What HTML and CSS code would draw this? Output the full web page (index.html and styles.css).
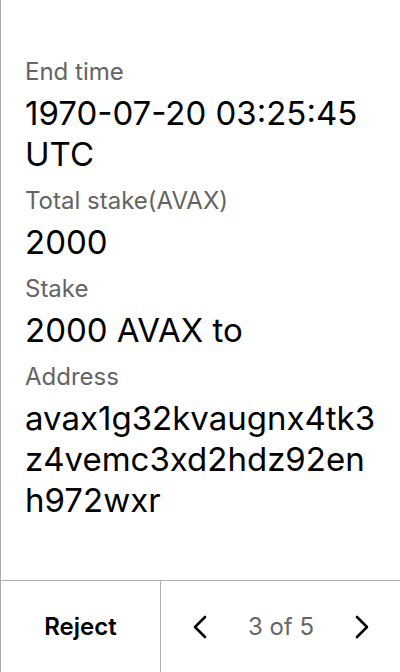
FILE: index.html
```html
<!DOCTYPE html>
<html>
<head>
<meta charset="utf-8">
<link rel="stylesheet" href="styles.css">
</head>
<body>
<div class="screen">
  <div class="content">
    <div class="field">
      <div class="label">End time</div>
      <div class="value">1970-07-20 03:25:45 UTC</div>
    </div>
    <div class="field">
      <div class="label">Total stake(AVAX)</div>
      <div class="value">2000</div>
    </div>
    <div class="field">
      <div class="label">Stake</div>
      <div class="value">2000 AVAX to</div>
    </div>
    <div class="field">
      <div class="label">Address</div>
      <div class="value addr">avax1g32kvaugnx4tk3z4vemc3xd2hdz92enh972wxr</div>
    </div>
  </div>
  <div class="footer">
    <div class="reject">Reject</div>
    <div class="pager">
      <svg class="chev" width="16" height="24" viewBox="0 0 16 24"><path d="M13 2 L3 12 L13 22" fill="none" stroke="#000" stroke-width="2.6" stroke-linecap="round" stroke-linejoin="round"/></svg>
      <span class="count">3 of 5</span>
      <svg class="chev" width="16" height="24" viewBox="0 0 16 24"><path d="M3 2 L13 12 L3 22" fill="none" stroke="#000" stroke-width="2.6" stroke-linecap="round" stroke-linejoin="round"/></svg>
    </div>
  </div>
</div>
</body>
</html>
```

FILE: styles.css
```css
html, body {
  margin: 0;
  padding: 0;
  background: #fff;
}
body {
  font-family: Inter, "Noto Sans", sans-serif;
  color: #000;
}
.screen {
  width: 399px;
  height: 672px;
  border-left: 1px solid #a8a8a8;
  display: flex;
  flex-direction: column;
}
.content {
  flex: 1;
  padding: 57px 20px 0 24px;
  display: flex;
  flex-direction: column;
  gap: 11px;
}
.field {
  display: flex;
  flex-direction: column;
  gap: 6px;
}
.label {
  font-size: 24px;
  line-height: 30px;
  color: #646464;
}
.value {
  font-size: 33px;
  line-height: 41px;
  color: #000;
}
.addr {
  word-break: break-all;
}
.footer {
  height: 91px;
  border-top: 1px solid #b0b0b0;
  display: flex;
}
.reject {
  width: 159px;
  border-right: 1px solid #b0b0b0;
  display: flex;
  align-items: center;
  justify-content: center;
  font-size: 24px;
  font-weight: 600;
}
.pager {
  flex: 1;
  display: flex;
  align-items: center;
  justify-content: space-between;
  padding: 0 30px 0 31px;
}
.count {
  font-size: 24px;
  color: #666;
}
.chev {
  display: block;
}
```
